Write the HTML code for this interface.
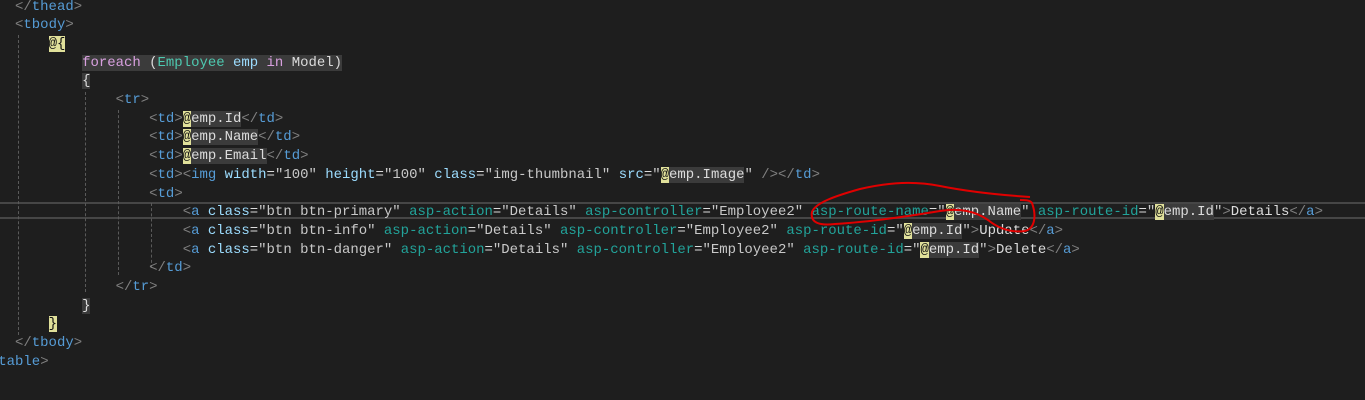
<!DOCTYPE html>
<html><head><meta charset="utf-8"><style>
body{margin:0;width:1365px;height:400px;background:#1e1e1e;overflow:hidden;position:relative;font-family:"Liberation Mono",monospace;font-size:13.97px;}
.l{position:absolute;left:-18.5px;height:18.7px;line-height:18.7px;white-space:pre;color:#dcdcdc;}
.p{color:#808080}.t{color:#569cd6}.a{color:#9cdcfe}.v{color:#c8c8c8}.s{color:#22a39a}
.k{color:#d8a0df}.c{color:#4ec9b0}
.at{background:#e0e09a;color:#111}
.h{background:#3b3b3b}
.g{position:absolute;width:0;border-left:1px dashed #5a5a5a}
.cur{position:absolute;left:0;width:1365px;height:17px;top:202px;border-top:2px solid #464646;border-bottom:2px solid #464646;box-sizing:border-box}
</style></head><body>
<div class="cur"></div>
<div class="g" style="left:18px;top:35px;height:300px"></div>
<div class="g" style="left:85px;top:92px;height:200px"></div>
<div class="g" style="left:118px;top:110px;height:165px"></div>
<div class="g" style="left:151px;top:203px;height:65px"></div>
<div class="l" style="top:-2.5px">    <span class="p">&lt;/</span><span class="t">thead</span><span class="p">&gt;</span></div>
<div class="l" style="top:16.2px">    <span class="p">&lt;</span><span class="t">tbody</span><span class="p">&gt;</span></div>
<div class="l" style="top:34.9px">        <span class="at">@{</span></div>
<div class="l" style="top:53.6px">            <span class="h"><span class="k">foreach</span> (<span class="c">Employee</span> <span class="a">emp</span> <span class="k">in</span> Model)</span></div>
<div class="l" style="top:72.3px">            <span class="h">{</span></div>
<div class="l" style="top:91px">                <span class="p">&lt;</span><span class="t">tr</span><span class="p">&gt;</span></div>
<div class="l" style="top:109.7px">                    <span class="p">&lt;</span><span class="t">td</span><span class="p">&gt;</span><span class="at">@</span><span class="h">emp.Id</span><span class="p">&lt;/</span><span class="t">td</span><span class="p">&gt;</span></div>
<div class="l" style="top:128.4px">                    <span class="p">&lt;</span><span class="t">td</span><span class="p">&gt;</span><span class="at">@</span><span class="h">emp.Name</span><span class="p">&lt;/</span><span class="t">td</span><span class="p">&gt;</span></div>
<div class="l" style="top:147.1px">                    <span class="p">&lt;</span><span class="t">td</span><span class="p">&gt;</span><span class="at">@</span><span class="h">emp.Email</span><span class="p">&lt;/</span><span class="t">td</span><span class="p">&gt;</span></div>
<div class="l" style="top:165.8px">                    <span class="p">&lt;</span><span class="t">td</span><span class="p">&gt;&lt;</span><span class="t">img</span> <span class="a">width</span>=<span class="v">"100"</span> <span class="a">height</span>=<span class="v">"100"</span> <span class="a">class</span>=<span class="v">"img-thumbnail"</span> <span class="a">src</span>=<span class="v">"</span><span class="at">@</span><span class="h">emp.Image</span><span class="v">"</span> <span class="p">/&gt;&lt;/</span><span class="t">td</span><span class="p">&gt;</span></div>
<div class="l" style="top:184.5px">                    <span class="p">&lt;</span><span class="t">td</span><span class="p">&gt;</span></div>
<div class="l" style="top:203.2px">                        <span class="p">&lt;</span><span class="t">a</span> <span class="a">class</span>=<span class="v">"btn btn-primary"</span> <span class="s">asp-action</span>=<span class="v">"Details"</span> <span class="s">asp-controller</span>=<span class="v">"Employee2"</span> <span class="s">asp-route-name</span>=<span class="v">"</span><span class="at">@</span><span class="h">emp.Name</span><span class="v">"</span> <span class="s">asp-route-id</span>=<span class="v">"</span><span class="at">@</span><span class="h">emp.Id</span><span class="v">"</span><span class="p">&gt;</span>Details<span class="p">&lt;/</span><span class="t">a</span><span class="p">&gt;</span></div>
<div class="l" style="top:221.9px">                        <span class="p">&lt;</span><span class="t">a</span> <span class="a">class</span>=<span class="v">"btn btn-info"</span> <span class="s">asp-action</span>=<span class="v">"Details"</span> <span class="s">asp-controller</span>=<span class="v">"Employee2"</span> <span class="s">asp-route-id</span>=<span class="v">"</span><span class="at">@</span><span class="h">emp.Id</span><span class="v">"</span><span class="p">&gt;</span>Update<span class="p">&lt;/</span><span class="t">a</span><span class="p">&gt;</span></div>
<div class="l" style="top:240.6px">                        <span class="p">&lt;</span><span class="t">a</span> <span class="a">class</span>=<span class="v">"btn btn-danger"</span> <span class="s">asp-action</span>=<span class="v">"Details"</span> <span class="s">asp-controller</span>=<span class="v">"Employee2"</span> <span class="s">asp-route-id</span>=<span class="v">"</span><span class="at">@</span><span class="h">emp.Id</span><span class="v">"</span><span class="p">&gt;</span>Delete<span class="p">&lt;/</span><span class="t">a</span><span class="p">&gt;</span></div>
<div class="l" style="top:259.3px">                    <span class="p">&lt;/</span><span class="t">td</span><span class="p">&gt;</span></div>
<div class="l" style="top:278px">                <span class="p">&lt;/</span><span class="t">tr</span><span class="p">&gt;</span></div>
<div class="l" style="top:296.7px">            <span class="h">}</span></div>
<div class="l" style="top:315.4px">        <span class="at">}</span></div>
<div class="l" style="top:334.1px">    <span class="p">&lt;/</span><span class="t">tbody</span><span class="p">&gt;</span></div>
<div class="l" style="top:352.8px"><span class="p">&lt;/</span><span class="t">table</span><span class="p">&gt;</span></div>
<svg style="position:absolute;left:0;top:0" width="1365" height="400"><path d="M1030 197 C1000 195 970 192 940 186 C915 181 890 182 860 189 C835 196 815 203 812 212 C810 222 818 226 835 224 C870 222 910 216 940 211 C960 208 975 211 988 220 C998 228 1010 233 1025 231 C1036 228 1036 214 1032 203 C1030 200 1025 200 1020 200" fill="none" stroke="#e00000" stroke-width="2"/></svg>
</body></html>
